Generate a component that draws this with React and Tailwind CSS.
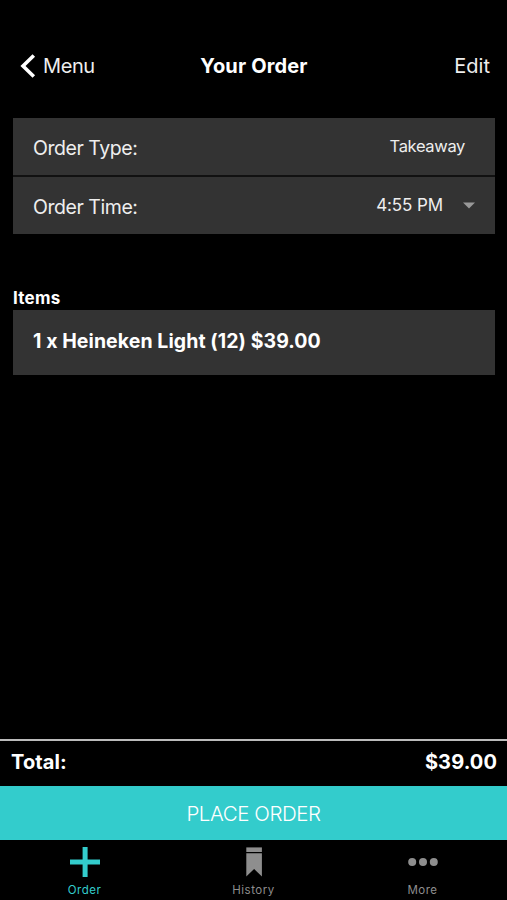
const tabs = [
  { id: 'order', label: 'Order', active: true },
  { id: 'history', label: 'History', active: false },
  { id: 'more', label: 'More', active: false },
]

const TabIcon = ({ id }) => {
  if (id === 'order') {
    return (
      <svg className="w-[30px] h-[30px]" viewBox="0 0 30 30" fill="currentColor">
        <path d="M12.6 0h5v12.4H30v5H17.6V30h-5V17.4H0v-5h12.6z" />
      </svg>
    )
  }
  if (id === 'history') {
    return (
      <svg className="w-[30px] h-[30px]" viewBox="0 0 30 30" fill="currentColor">
        <path d="M7.3 0.4h15.6v4.6H7.3z" />
        <path d="M7.3 6.2h15.6v23.4L15.1 22l-7.8 7.6z" />
      </svg>
    )
  }
  return (
    <svg className="w-[30px] h-[30px]" viewBox="0 0 30 30" fill="currentColor">
      <circle cx="4.2" cy="15" r="4" />
      <circle cx="15" cy="15" r="4" />
      <circle cx="25.8" cy="15" r="4" />
    </svg>
  )
}

const Header = () => (
  <header className="grid grid-cols-3 items-center h-[52px] mt-10 pl-5 pr-[17px] text-xl text-[#eeeeee]">
    <button className="flex items-center">
      <svg className="w-4 h-6 mr-[7px]" viewBox="0 0 16 24" fill="none" stroke="white" strokeWidth="3.6">
        <path d="M13.8 1.5L3 12l10.8 10.5" />
      </svg>
      <span className="tracking-[-0.4px]">Menu</span>
    </button>
    <h1 className="text-center font-bold text-white whitespace-nowrap tracking-[0.15px] -ml-[2px]">Your Order</h1>
    <button className="text-right">Edit</button>
  </header>
)

const App = () => {
  return (
    <div className="flex flex-col h-[900px] w-full bg-black font-['Inter',sans-serif] overflow-hidden">
      <Header />

      <main className="flex-1 pl-[13px] pr-3 pt-[26px]">
        <div className="bg-[#111111] flex flex-col gap-[2px] text-[#eeeeee]">
          <div className="flex items-center justify-between h-[57px] bg-[#333333] pl-5 pr-[30px]">
            <span className="text-[19.5px] tracking-[-0.45px] pt-[4px]">Order Type:</span>
            <span className="text-[16.5px] tracking-[-0.35px]">Takeaway</span>
          </div>
          <div className="flex items-center h-[57px] bg-[#333333] pl-5 pr-5">
            <span className="flex-1 text-[19.5px] tracking-[-0.45px] pt-[4px]">Order Time:</span>
            <span className="text-[17px] tracking-[-0.1px] pt-px">4:55 PM</span>
            <svg className="w-3 h-[7px] ml-5" viewBox="0 0 12 7" fill="#999999">
              <path d="M0 0.5h12L6 6.5z" />
            </svg>
          </div>
        </div>

        <h2 className="mt-[54px] h-[22px] leading-[20px] text-[17px] font-bold tracking-[0.25px] text-white">Items</h2>
        <div className="flex items-center h-[65px] bg-[#333333] pl-5 pb-[2px] text-[19.5px] font-bold tracking-[0.07px] text-white">
          1 x Heineken Light (12) $39.00
        </div>
      </main>

      <div className="flex items-center justify-between h-[47px] border-t-2 border-[#bbbbbb] pl-[11px] pr-[10px] pb-[3px] text-xl font-bold tracking-[0.1px] text-white">
        <span>Total:</span>
        <span>$39.00</span>
      </div>
      <button className="h-[54px] bg-[#33cccc] pt-[2px] text-[20.5px] font-light tracking-[-0.45px] text-white">PLACE ORDER</button>

      <nav className="grid grid-cols-3 h-[60px] pt-[7px]">
        {tabs.map((tab) => (
          <button
            key={tab.id}
            className={`flex flex-col items-center ${tab.active ? 'text-[#33cccc]' : 'text-[#8e8e8e]'}`}
          >
            <TabIcon id={tab.id} />
            <span className="mt-[5px] text-[11.5px] leading-4 tracking-[0.5px]">{tab.label}</span>
          </button>
        ))}
      </nav>
    </div>
  )
}

export default App
